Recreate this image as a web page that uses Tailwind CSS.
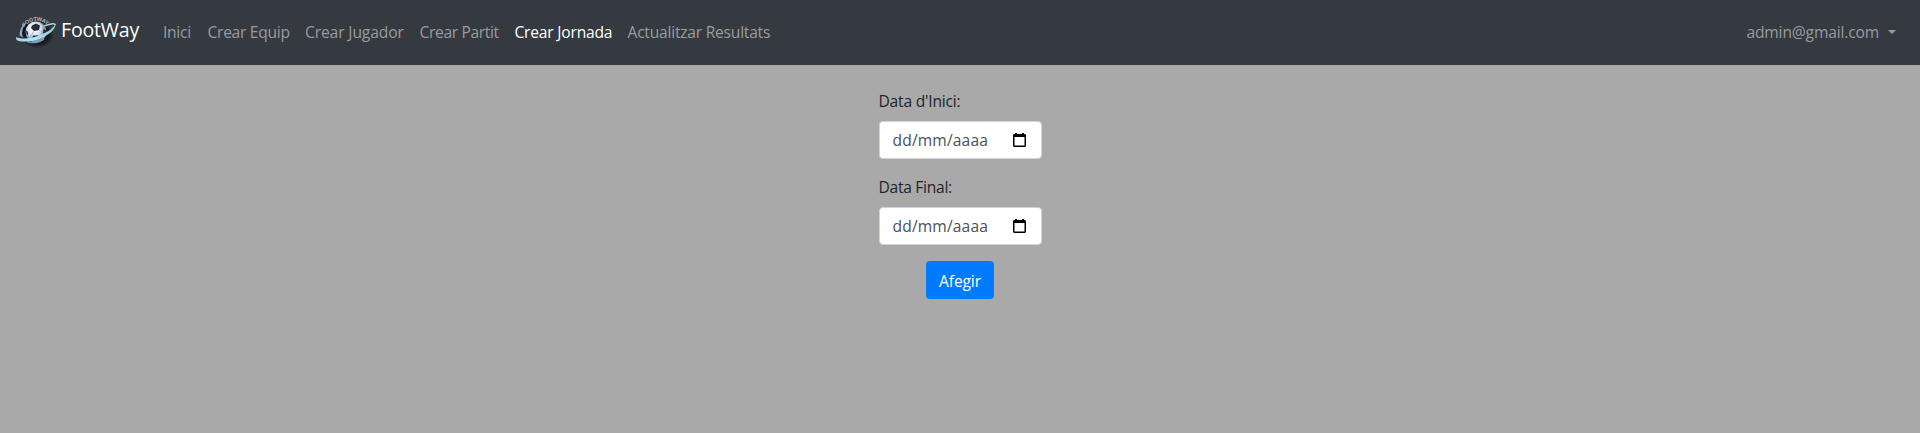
<!DOCTYPE html>
<html lang="ca">
<head>
<meta charset="utf-8">
<title>FootWay</title>
<script src="https://cdn.jsdelivr.net/npm/@tailwindcss/browser@4"></script>
</head>
<body class="min-h-screen bg-[#a9a9a9] font-['Open_Sans','Noto_Sans',sans-serif] text-[15.6px] leading-6 tracking-[-0.28px] text-[#212529]">
<nav class="flex h-[65px] items-center bg-[#343a40] px-4 text-[#999c9f] whitespace-nowrap">
  <a class="mr-4 flex h-[45px] w-[123px] items-start text-white">
    <svg class="mt-[5px] h-[36px] w-10 shrink-0 overflow-visible" viewBox="0 -2 40 36">
      <defs>
        <linearGradient id="ring" x1="0" x2="1"><stop stop-color="#a9d5e4"/><stop offset=".5" stop-color="#a8eceb"/><stop offset="1" stop-color="#8fc9cb"/></linearGradient>
        <radialGradient id="ball" cx=".4" cy=".35"><stop stop-color="#fff"/><stop offset=".65" stop-color="#dbe4f1"/><stop offset="1" stop-color="#8296b0"/></radialGradient>
        <path id="arc" d="M8 11C13 1.500 27 1.500 33 10"/>
        <filter id="soft"><feGaussianBlur stdDeviation="1"/></filter>
      </defs>
      <ellipse cx="21.500" cy="17.500" rx="14" ry="11.500" fill="#15191d" opacity=".9" filter="url(#soft)"/>
      <path d="M4 19C3 15 5 9 9 6L12 8C7 12 5 16 7 20Z" fill="#8dabc7"/>
      <path d="M7 19C5 13 8 8 11 6L13 8L10 19Z" fill="#101418"/>
      <path d="M28 9Q39 5 39.500 8" fill="none" stroke="#a7d4d8" stroke-width="1.500"/>
      <circle cx="20" cy="15" r="10.500" fill="url(#ball)"/>
      <path d="M16 8.500L20 6.500L24 8.500L23 13L18 14L15 11Z M9.800 13L12 15L12 18.500L10.500 17Z M27.500 12L30 13L30 17L27 16Z M17 18.500L22 18.500L25 21.500L16 22Z" fill="#252b38"/>
      <path d="M18 14L15 19M23 13L27 16" stroke="#96a1b3" stroke-width=".7"/>
      <path d="M0 20Q-1 25 9 24.500Q22 25 34 16Q40 11 39.500 7Q36 13 25 18Q11 23 3 21Q0 20.500 0 20Z" fill="url(#ring)"/>
      <path d="M11 24.500Q19 27.500 28 22" fill="none" stroke="#779cc9" stroke-width="1.500"/>
      <text class="font-['Liberation_Sans',sans-serif] text-[5.3px] font-bold tracking-normal" fill="#b8bbbd"><textPath href="#arc" startOffset="1" textLength="26">FOOTWAY</textPath></text>
    </svg>
    <span class="ml-[5px] mt-[5px] text-[19.600px] leading-[30px] tracking-[-0.2px]">FootWay</span>
  </a>
  <div class="flex pb-0.5 pl-2">
    <a class="w-[44.500px]">Inici</a>
    <a class="w-[97.500px]">Crear Equip</a>
    <a class="w-[114.500px] tracking-[-0.12px]">Crear Jugador</a>
    <a class="w-[95px] tracking-[-0.35px]">Crear Partit</a>
    <a class="w-[113px] tracking-[-0.2px] text-white">Crear Jornada</a>
    <a class="tracking-[-0.23px]">Actualitzar Resultats</a>
  </div>
  <a class="ml-auto flex items-center pb-0.5 pr-2 tracking-[-0.16px]">admin@gmail.com<span class="ml-[9px] border-x-[4.500px] border-t-[4.500px] border-x-transparent border-t-[#999c9f]"></span></a>
</nav>
<form class="mx-auto flex w-[163px] flex-col pt-6">
  <label class="h-8 w-full tracking-[-0.2px]">Data d'Inici:</label>
  <div class="flex h-[38px] items-center justify-between rounded border border-[#ced4da] bg-white pl-[13px] pr-[15px] text-[#495057]">
    <span class="tracking-[0.15px]">dd/mm/aaaa</span>
    <svg class="h-[14px] w-[13px]" viewBox="0 0 13 14"><path fill="#000" fill-rule="evenodd" d="M2 0H4V1H9V0H11V1H12L13 2V13L12 14H1L0 13V2L1 1H2ZM1.500 4V12.500H11.500V4Z"/></svg>
  </div>
  <label class="mt-4 h-8 w-full">Data Final:</label>
  <div class="flex h-[38px] items-center justify-between rounded border border-[#ced4da] bg-white pl-[13px] pr-[15px] text-[#495057]">
    <span class="tracking-[0.15px]">dd/mm/aaaa</span>
    <svg class="h-[14px] w-[13px]" viewBox="0 0 13 14"><path fill="#000" fill-rule="evenodd" d="M2 0H4V1H9V0H11V1H12L13 2V13L12 14H1L0 13V2L1 1H2ZM1.500 4V12.500H11.500V4Z"/></svg>
  </div>
  <button type="button" class="mt-4 h-[38px] w-[68px] self-center rounded bg-[#007bff] pt-px text-white tracking-[-0.14px]">Afegir</button>
</form>
</body>
</html>
